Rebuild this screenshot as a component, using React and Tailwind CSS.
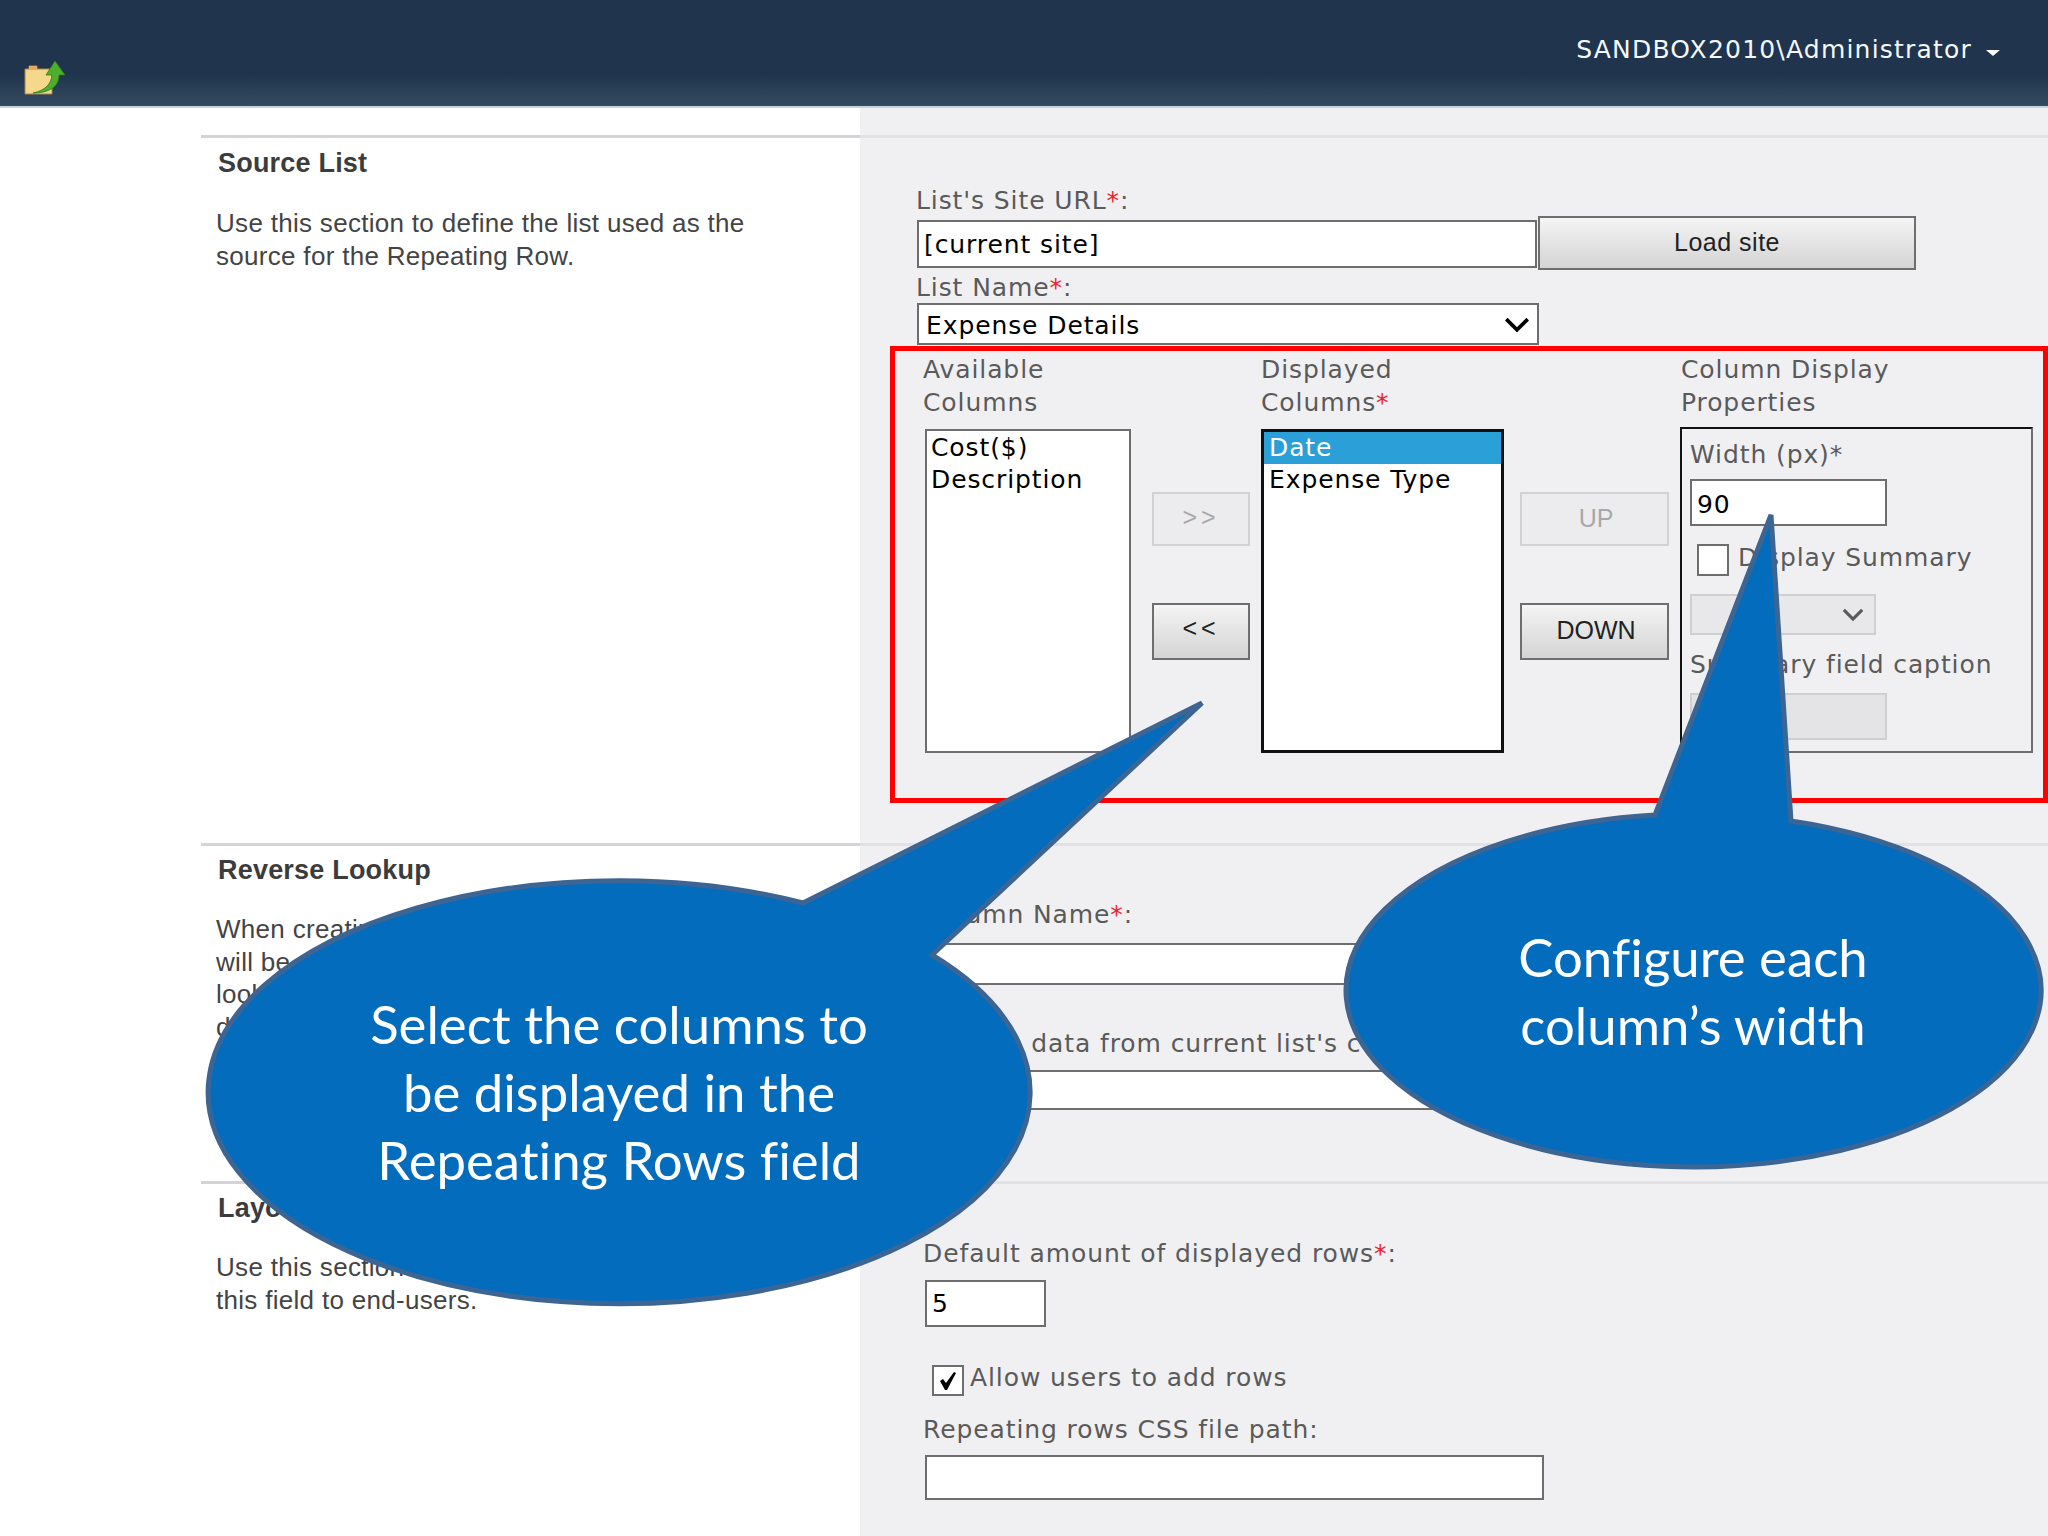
function Label({ children, required, className = '' }) {
  return (
    <div className={`h-[32px] leading-[34px] whitespace-nowrap text-[#5a5a5a] ${className}`}>
      {children}
      {required && <span className="text-[#f0202c]">*</span>}
      {required && ':'}
    </div>
  );
}

function TextBox({ value = '', className = '' }) {
  return (
    <input
      readOnly
      defaultValue={value}
      className={`block border-2 border-[#6e6e6e] bg-white px-[5px] text-black outline-none ${className}`}
    />
  );
}

function ActionButton({ children, disabled, className = '' }) {
  return (
    <button
      className={`block w-full border-2 font-['Liberation_Sans',sans-serif] tracking-normal ${
        disabled
          ? 'border-[#d2d2d4] bg-[#ececee] text-[#a8a8aa]'
          : 'border-[#6e6e6e] bg-gradient-to-b from-[#f4f4f4] to-[#d4d4d4] text-[#222]'
      } ${className}`}
    >
      {children}
    </button>
  );
}

function Chevron({ className = '', color = '#000' }) {
  return (
    <svg viewBox="0 0 24 14" className={className} fill="none" stroke={color} strokeWidth="3.4">
      <path d="M2 2 L12 12 L22 2" />
    </svg>
  );
}

function FolderIcon() {
  return (
    <svg viewBox="0 0 42 36" className="w-[42px] h-[36px]">
      <path d="M1 9 h4 v-3 h8 v3 h15 v25 H1 Z" fill="#f6d88c" stroke="#a8844a" strokeWidth="1" />
      <path d="M5 6 h8 v4 H5 Z" fill="#e8a860" />
      <path d="M9 33 C22 30 27 24 28 15 L22 15 L31 1 L41 15 L35 15 C35 27 25 33 9 33 Z" fill="#4fae2c" stroke="#2f7f1c" strokeWidth="0.8" />
    </svg>
  );
}

function SectionInfo({ title, lines, titleClass = 'mt-[8px]', bodyClass = 'mt-[28px]' }) {
  return (
    <div className="ml-[201px] border-t-[3px] border-[#d4d4d8] pl-[15px] bg-white">
      <div className={`ml-[2px] h-[32px] leading-[32px] font-bold text-[27px] tracking-[0.2px] text-[#3c3c3c] ${titleClass}`}>{title}</div>
      <div className={`leading-[32.5px] text-[26px] tracking-[0.3px] text-[#444] ${bodyClass}`}>
        {lines.map((l) => (
          <div key={l} className="whitespace-nowrap">{l}</div>
        ))}
      </div>
    </div>
  );
}

function Callouts() {
  return (
    <svg viewBox="0 0 2048 1536" className="absolute inset-0 w-[2048px] h-[1536px] pointer-events-none">
      <path
        d="M803 903 L1202 703 L932 955 A411 211.5 0 1 1 803 903 Z"
        fill="#036cbd"
        stroke="#3d6594"
        strokeWidth="5"
      />
      <path
        d="M1655 815 L1771 515 L1791 821 A347.5 176.5 0 1 1 1655 815 Z"
        fill="#036cbd"
        stroke="#3d6594"
        strokeWidth="5"
      />
    </svg>
  );
}

export default function App() {
  return (
    <div className="relative w-[2048px] h-[1536px] overflow-hidden bg-white font-['Liberation_Sans',Arial,sans-serif] text-[25px]">
      {/* top bar */}
      <div className="relative h-[108px] border-b-2 border-[#c6d2dc] bg-gradient-to-b from-[#20354d] from-70% to-[#354b61] flex items-start justify-between pl-[24px] pr-[48px]">
        <div className="mt-[60px]">
          <FolderIcon />
        </div>
        <div className="mt-[34px] flex items-center text-[25px] leading-[32px] tracking-[1.2px] text-[#f4f8fb] font-['DejaVu_Sans',sans-serif]">
          SANDBOX2010\Administrator
          <span className="ml-[14px] mt-[6px] border-x-[7px] border-t-[6px] border-x-transparent border-t-white" />
        </div>
      </div>

      <div className="grid grid-cols-[860px_1fr] grid-rows-[27px_708px_338px_355px]">
        <div />
        <div className="bg-[#f0f0f2]" />

        {/* Source list */}
        <SectionInfo
          title="Source List"
          titleClass="mt-[9px]"
          lines={['Use this section to define the list used as the', 'source for the Repeating Row.']}
        />
        <div className="border-t-[3px] border-[#e2e2e5] bg-[#f0f0f2] pl-[30px] font-['DejaVu_Sans',sans-serif] text-[25px] tracking-[0.9px]">
          <div className="pl-[26px]">
            <Label className="mt-[46px]" required>List's Site URL</Label>
            <div className="flex h-[54px] items-start">
              <TextBox value="[current site]" className="mt-[4px] ml-[1px] w-[620px] h-[48px]" />
              <ActionButton className="!w-[378px] h-[54px] ml-[1px] !tracking-[0.5px]">Load site</ActionButton>
            </div>
            <Label className="mt-[1px]" required>List Name</Label>
            <div className="ml-[1px] flex h-[42px] w-[622px] items-center justify-between border-2 border-[#6e6e6e] bg-white pl-[7px] pr-[7px] pt-[4px] text-black">
              Expense Details
              <Chevron className="w-[26px] h-[15px] -mt-[4px]" />
            </div>
          </div>

          {/* red box */}
          <div className="mt-[1px] flex h-[457px] border-[5px] border-[#ff0000] pl-[28px]">
            <div className="w-[208px]">
              <div className="mt-[3px] leading-[32.5px] text-[#5a5a5a]">
                Available<br />Columns
              </div>
              <div className="ml-[2px] mt-[10px] h-[324px] border-2 border-[#6e6e6e] bg-white pl-[4px] pt-[1px] leading-[32px] text-black">
                <div>Cost($)</div>
                <div>Description</div>
              </div>
            </div>
            <div className="ml-[21px] w-[98px] pt-[141px] flex flex-col gap-[57px]">
              <ActionButton disabled className="h-[54px] !tracking-[4px] pb-[2px]">&gt;&gt;</ActionButton>
              <ActionButton className="h-[57px] !tracking-[4px] pb-[6px]">&lt;&lt;</ActionButton>
            </div>
            <div className="ml-[11px] w-[243px]">
              <div className="mt-[3px] leading-[32.5px] text-[#5a5a5a]">
                Displayed<br />Columns<span className="text-[#f0202c]">*</span>
              </div>
              <div className="mt-[10px] h-[324px] border-[3px] border-[#111] bg-white leading-[32px] text-black">
                <div className="bg-[#2a9fd8] pl-[5px] text-white">Date</div>
                <div className="pl-[5px]">Expense Type</div>
              </div>
            </div>
            <div className="ml-[16px] w-[149px] pt-[141px] flex flex-col gap-[57px]">
              <ActionButton disabled className="h-[54px] pl-[3px]">UP</ActionButton>
              <ActionButton className="h-[57px] pb-[2px] pl-[3px]">DOWN</ActionButton>
            </div>
            <div className="ml-[11px] w-[353px]">
              <div className="mt-[3px] ml-[1px] leading-[32.5px] whitespace-nowrap text-[#5a5a5a]">
                Column Display<br />Properties
              </div>
              <div className="mt-[8px] h-[326px] border-2 border-t-[#111] border-l-[#111] border-r-[#6e6e6e] border-b-[#6e6e6e] pl-[8px] pt-[9px]">
                <div className="h-[33px] leading-[33px] text-[#5a5a5a]">Width (px)*</div>
                <TextBox value="90" className="mt-[8px] w-[197px] h-[47px] pt-[3px]" />
                <div className="mt-[18px] flex h-[32px] items-center text-[#5a5a5a] whitespace-nowrap">
                  <span className="ml-[7px] w-[32px] h-[32px] border-2 border-[#6e6e6e] bg-white" />
                  <span className="ml-[9px] pb-[5px]">Display Summary</span>
                </div>
                <div className="mt-[18px] flex h-[41px] w-[186px] items-center justify-end border-2 border-[#cfcfd2] bg-[#e8e8ea] pr-[10px]">
                  <Chevron className="w-[22px] h-[13px]" color="#5a5a5a" />
                </div>
                <div className="mt-[13px] h-[33px] leading-[33px] text-[#5a5a5a] whitespace-nowrap">Summary field caption</div>
                <div className="mt-[12px] w-[197px] h-[47px] border-2 border-[#cfcfd2] bg-[#e4e4e6]" />
              </div>
            </div>
          </div>
        </div>

        {/* Reverse lookup */}
        <SectionInfo
          title="Reverse Lookup"
          bodyClass="mt-[27px]"
          lines={[
            'When creating a lookup column, the values',
            'will be stored in the column of the other',
            'lookup list so that the details can be',
            'displayed on the related item.',
          ]}
        />
        <div className="border-t-[3px] border-[#e2e2e5] bg-[#f0f0f2] pl-[57px] font-['DejaVu_Sans',sans-serif] text-[25px] tracking-[0.9px]">
          <Label className="mt-[52px] ml-[6px]" required>Column Name</Label>
          <TextBox className="mt-[13px] w-[620px] h-[42px]" />
          <Label className="mt-[42px] -ml-[6px]">Retrieve data from current list's column:</Label>
          <TextBox className="mt-[11px] w-[620px] h-[40px]" />
        </div>

        {/* Layout */}
        <SectionInfo
          title="Layout"
          bodyClass="mt-[27px]"
          lines={['Use this section to set the layout and expose', 'this field to end-users.']}
        />
        <div className="border-t-[3px] border-[#e2e2e5] bg-[#f0f0f2] pl-[63px] font-['DejaVu_Sans',sans-serif] text-[25px] tracking-[0.9px]">
          <Label className="mt-[53px]" required>Default amount of displayed rows</Label>
          <TextBox value="5" className="mt-[11px] ml-[2px] w-[121px] h-[47px]" />
          <div className="mt-[38px] flex h-[31px] items-center text-[#5a5a5a]">
            <span className="ml-[9px] flex w-[32px] h-[31px] items-center justify-center border-2 border-[#6e6e6e] bg-white">
              <svg viewBox="0 0 20 20" className="w-[20px] h-[20px]" fill="#000">
                <path d="M2 10 L5 8 L8 12 L16 1 L18 2 L9 19 L7 19 Z" />
              </svg>
            </span>
            <span className="ml-[6px] pb-[5px] whitespace-nowrap">Allow users to add rows</span>
          </div>
          <Label className="mt-[18px] !leading-[32px]">Repeating rows CSS file path:</Label>
          <TextBox className="mt-[9px] ml-[2px] w-[619px] h-[45px]" />
        </div>
      </div>

      <Callouts />

      {/* callout captions */}
      <div className="absolute left-[206px] top-[990px] w-[826px] text-center font-['Lato',sans-serif] text-[52.7px] leading-[68px] text-white [font-variant-ligatures:none]">
        Select the columns to<br />be displayed in the<br />Repeating Rows field
      </div>
      <div className="absolute left-[1344px] top-[923px] w-[698px] text-center font-['Lato',sans-serif] text-[52.7px] leading-[68px] text-white [font-variant-ligatures:none]">
        Configure each<br />column’s width
      </div>
    </div>
  );
}
